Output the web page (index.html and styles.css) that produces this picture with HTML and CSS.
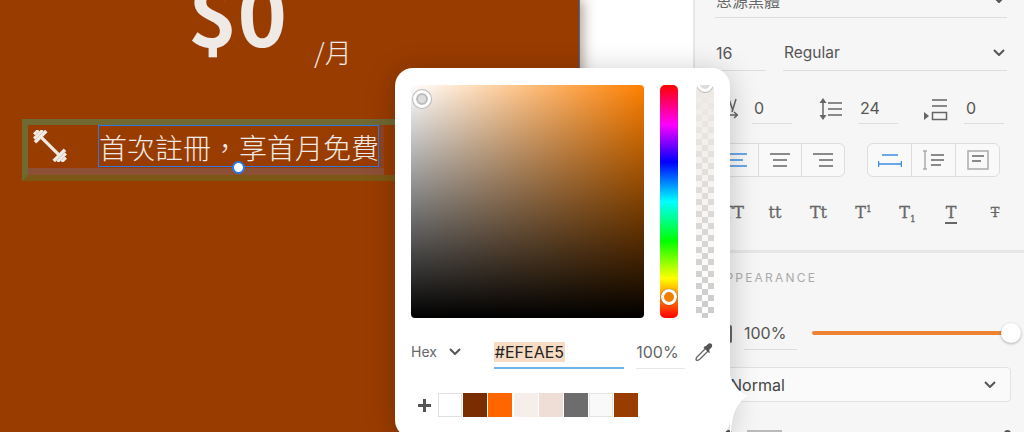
FILE: index.html
```html
<!DOCTYPE html>
<html lang="zh-Hant">
<head>
<meta charset="utf-8">
<title>Color picker</title>
<link rel="stylesheet" href="styles.css">
</head>
<body>
<div class="app">
  <main class="canvas">
    <div class="price">$0</div>
    <div class="per">/月</div>
    <div class="hl-group"></div>
    <div class="hl-inner"></div>
    <svg class="gym" viewBox="-18 -16 36 32" width="36" height="32">
      <g fill="#EFEAE5" transform="rotate(45)">
        <rect x="-13" y="-1.600" width="26" height="3.200"/>
        <rect x="-18" y="-6" width="3" height="12"/>
        <rect x="-15" y="-8" width="3.500" height="16"/>
        <rect x="-21" y="-3" width="3" height="6"/>
        <rect x="15" y="-6" width="3" height="12"/>
        <rect x="11.500" y="-8" width="3.500" height="16"/>
        <rect x="18" y="-3" width="3" height="6"/>
      </g>
    </svg>
    <div class="headline">首次註冊，享首月免費</div>
    <div class="handle"></div>
  </main>
  <div class="stage"></div>
  <aside class="panel">
    <div class="row-font"><span class="font-name">思源黑體</span><svg class="chev" viewBox="0 0 12 7" width="12" height="7"><path d="M1 1l5 5 5-5"/></svg></div>
    <div class="row-size">
      <div class="field size">16</div>
      <div class="field weight"><span>Regular</span><svg class="chev" viewBox="0 0 12 7" width="12" height="7"><path d="M1 1l5 5 5-5"/></svg></div>
    </div>
    <div class="row-metrics">
      <div class="metric first">
        <svg class="m-icon" viewBox="0 0 22 22" width="22" height="22"><path d="M13 1l4 12M20 1l-4 13" class="line"/><path d="M10 17h11M18 14l3.500 3-3.500 3" class="line"/></svg>
        <div class="field mini">0</div>
      </div>
      <div class="metric">
        <svg class="m-icon" viewBox="0 0 24 22" width="24" height="22"><path class="line" d="M4 4v14M9 5h14M9 11h14M9 17h14"/><path class="fill" d="M4 0l3.500 5h-7zM4 22l3.500-5h-7z"/></svg>
        <div class="field mini">24</div>
      </div>
      <div class="metric">
        <svg class="m-icon" viewBox="0 0 26 24" width="26" height="24"><path class="line" d="M9 2h15M9 8h15"/><path class="line" d="M9.500 14.500h14v7h-14z"/><path class="fill" d="M1 14l5 4-5 4z"/></svg>
        <div class="field mini">0</div>
      </div>
    </div>
    <div class="row-align">
      <div class="seg seg-a">
        <div class="seg-btn"><svg viewBox="0 0 20 14" width="20" height="14"><path class="blue" d="M0 1h20M0 7h16M0 13h20"/></svg></div>
        <div class="seg-btn"><svg viewBox="0 0 20 14" width="20" height="14"><path class="line" d="M0 1h20M3 7h14M3 13h14"/></svg></div>
        <div class="seg-btn"><svg viewBox="0 0 20 14" width="20" height="14"><path class="line" d="M0 1h20M6 7h14M6 13h14"/></svg></div>
      </div>
      <div class="seg seg-b">
        <div class="seg-btn"><svg viewBox="0 0 24 14" width="24" height="14"><path class="blue" d="M4 2h16M1 11h22M.5 8v6M23.500 8v6"/></svg></div>
        <div class="seg-btn"><svg viewBox="0 0 22 20" width="22" height="20"><path class="thin" d="M2 1v18M0 1h4M0 19h4"/><path class="line" d="M8 5h13M8 10h13M8 15h10"/></svg></div>
        <div class="seg-btn"><svg viewBox="0 0 22 20" width="22" height="20"><path class="thin" d="M1 1h20v18H1z"/><path class="line" d="M5 6h12M5 11h9"/></svg></div>
      </div>
    </div>
    <div class="row-case">
      <span class="tt">TT</span><span class="tt">tt</span><span class="tt">Tt</span>
      <span class="tt">T<sup>1</sup></span><span class="tt">T<sub>1</sub></span>
      <span class="tt"><span class="under">T</span></span><span class="tt small"><span class="strike">T</span></span>
    </div>
    <div class="section">
      <div class="sec-title">APPEARANCE</div>
      <div class="row-opacity">
        <div class="op-icon"></div>
        <div class="field pct">100%</div>
        <div class="slider"><div class="thumb"></div></div>
      </div>
      <div class="select"><span>Normal</span><svg class="chev" viewBox="0 0 12 7" width="12" height="7"><path d="M1 1l5 5 5-5"/></svg></div>
      <div class="row-next"><i class="dot"></i><i class="next-box"></i><i class="dot end"></i></div>
    </div>
  </aside>

  <section class="popover">
    <svg class="tail" viewBox="0 0 20 60" width="20" height="60"><path d="M0 0C3 12 10 17 18 21 8 27 2 36 1 60H0z"/></svg>
    <div class="pick-row">
      <div class="sb"><div class="sb-thumb"></div></div>
      <div class="hue"><div class="hue-thumb"></div></div>
      <div class="alpha"><div class="alpha-thumb"></div></div>
    </div>
    <div class="value-row">
      <span class="mode">Hex</span>
      <svg class="chev mode-chev" viewBox="0 0 12 7" width="12" height="7"><path d="M1 1l5 5 5-5"/></svg>
      <div class="hex"><span class="hex-sel">#EFEAE5</span></div>
      <div class="opa">100%</div>
      <svg class="dropper" viewBox="0 0 20 20" width="20" height="20"><path class="d-body" d="M12 6 3 15c-1 1-1 2-1 2.500s.8 1 1.500.8 1.500-.4 2.500-1.300l9-9"/><path class="d-head" d="M10.500 4.500l1.500-.5 1.500-1.500c1.500-1.500 3-1.500 4-.5s1 2.500-.5 4L15.500 7.500l-.5 1.500 1 1-1 1L9.500 5.500l1-1z"/></svg>
    </div>
    <div class="swatch-row">
      <svg class="plus" viewBox="0 0 15 15" width="15" height="15"><path d="M7.500 1v13M1 7.500h13"/></svg>
      <div class="swatches">
        <i class="sw s1"></i><i class="sw s2"></i><i class="sw s3"></i><i class="sw s4"></i>
        <i class="sw s5"></i><i class="sw s6"></i><i class="sw s7"></i><i class="sw s8"></i>
      </div>
    </div>
  </section>
</div>
</body>
</html>
```
FILE: styles.css
```css
* { box-sizing: border-box; }
html, body { margin: 0; padding: 0; width: 1024px; height: 432px; overflow: hidden; background: #fff; }
body { font-family: Inter, "Noto Sans CJK TC", sans-serif; color: #555; }
.app { position: relative; display: flex; width: 1024px; height: 432px; overflow: hidden; }

/* canvas */
.canvas { position: relative; width: 580px; height: 432px; background: #993C00; border-right: 1px solid #3f6fa8; box-shadow: 3px 0 12px rgba(70, 40, 20, .45); color: #EFEAE5; font-family: "Noto Sans CJK TC", sans-serif; z-index: 1; }
.stage { width: 113px; height: 432px; background: #fff; }
.price { position: absolute; left: 188px; top: -44px; font-size: 84px; line-height: 110px; font-weight: 700; }
.per { position: absolute; left: 314px; top: 32px; font-size: 27px; line-height: 40px; font-weight: 300; }
.hl-group { position: absolute; left: 22px; top: 119px; width: 380px; height: 62px; border-style: solid; border-width: 6px 0 6px 6px; border-color: rgb(112, 105, 50) transparent rgb(125, 88, 20) rgb(112, 105, 50); }
.hl-inner { position: absolute; left: 28px; top: 168px; width: 356px; height: 7px; background: rgba(130, 100, 110, .5); }
.hl-inner::after { content: ""; position: absolute; left: 350px; top: -43px; width: 6px; height: 43px; background: rgba(130, 80, 80, .4); }
.gym { position: absolute; left: 32px; top: 130px; }
.headline { position: absolute; left: 98px; top: 125px; width: 281px; height: 42px; border: 1px solid #2f7ae0; font-size: 28px; line-height: 42px; font-weight: 300; white-space: nowrap; padding-left: 0; }
.handle { position: absolute; left: 232px; top: 161px; width: 13px; height: 13px; border-radius: 50%; background: #fff; border: 2px solid #2f7ae0; }

/* panel */
.panel { width: 331px; height: 432px; background: #f6f6f6; border-left: 2px solid #e6e6e6; padding: 0 0 0 20px; }
.chev { fill: none; stroke: #555; stroke-width: 2; flex: none; }
.line { fill: none; stroke: #666; stroke-width: 1.500; }
.thin { fill: none; stroke: #aaa; stroke-width: 1.500; }
.blue { fill: none; stroke: #3d8fe0; stroke-width: 1.500; }
.fill { fill: #666; }
.row-font { width: 292px; height: 18px; border-bottom: 1px solid #ddd; display: flex; justify-content: space-between; overflow: hidden; padding-right: 2px; }
.font-name { font-family: "Noto Sans CJK TC", sans-serif; font-size: 16px; line-height: 16px; margin-top: -8px; padding-left: 1px; color: #666; }
.row-font .chev { margin-top: -4px; }
.field { border-bottom: 1px solid #ddd; font-size: 16px; color: #555; }
.row-size { display: flex; gap: 17px; width: 292px; margin-top: 17px; }
.size { width: 51px; height: 36px; line-height: 37px; padding-left: 1px; }
.weight { flex: 1; height: 36px; line-height: 37px; display: flex; justify-content: space-between; align-items: center; padding: 0 2px 0 1px; font-size: 15.500px; }
.row-metrics { display: flex; margin-top: 25px; width: 292px; }
.metric { display: flex; align-items: flex-start; gap: 15px; width: 80px; margin-left: 26px; justify-content: flex-end; }
.metric.first { width: 77px; margin-left: 0; gap: 14px; }
.mini { width: 40px; flex: none; height: 28px; line-height: 25px; padding-left: 2px; }
.m-icon { margin-top: 2px; flex: none; }
.row-align { display: flex; gap: 22px; margin-top: 19px; }
.seg { display: flex; height: 34px; border: 1px solid #ddd; border-radius: 6px; background: #f9f9f9; }
.seg-a { width: 130px; }
.seg-b { width: 133px; }
.seg-btn { flex: 1; display: flex; align-items: center; justify-content: center; border-left: 1px solid #ddd; }
.seg-btn:first-child { border-left: 0; }
.row-case { display: grid; grid-template-columns: 42px 42px 45px 45px 43px 44px 44px; margin: 24px 0 0 -3px; height: 24px; font-family: "DejaVu Serif", serif; font-size: 16px; line-height: 24px; font-weight: 400; color: #666; -webkit-text-stroke: .3px #666; }
.tt { display: block; text-align: center; white-space: nowrap; }
.tt sup, .tt sub { font-size: 9px; line-height: 0; }
.under { display: inline-block; border-bottom: 2px solid #666; height: 23px; padding: 0 1px; }
.small { font-size: 13px; }
.strike { text-decoration: line-through; }
.section { margin: 25px 0 0 -20px; padding: 0 0 0 20px; border-top: 3px solid #e6e6e6; height: 200px; }
.sec-title { margin: 17px 0 0 0; font-size: 12px; line-height: 16px; letter-spacing: 2.200px; color: #aaa; }
.row-opacity { display: flex; align-items: center; margin-top: 32px; }
.op-icon { width: 17px; height: 18px; border: 2px solid #666; border-radius: 2px; margin-right: 12px; }
.pct { width: 53px; height: 32px; line-height: 30px; }
.slider { position: relative; width: 198px; height: 4px; border-radius: 2px; background: #EE8233; margin: -2px 0 0 15px; }
.thumb { position: absolute; left: 189px; top: -8px; width: 20px; height: 20px; border-radius: 50%; background: #fff; box-shadow: 0 1px 3px rgba(0, 0, 0, .3); }
.select { display: flex; width: 296px; height: 35px; margin-top: 17px; border: 1px solid #e2e2e2; border-radius: 4px; background: #fafafa; align-items: center; justify-content: space-between; padding: 0 14px; font-size: 16px; color: #444; }
.row-next { display: flex; align-items: flex-start; margin-top: 28px; width: 296px; }
.dot { display: block; width: 7px; height: 7px; border-radius: 50%; background: #555; margin-left: 10px; }
.next-box { display: block; width: 35px; height: 6px; background: #bbb; margin-left: 15px; }
.dot.end { margin-left: auto; }

/* popover */
.popover { position: absolute; left: 395px; top: 68px; width: 335px; height: 370px; background: #fff; border-radius: 18px; padding: 17px 16px; box-shadow: 0 4px 30px rgba(0, 0, 0, .22); z-index: 2; }
.tail { position: absolute; left: 335px; top: 307px; }
.tail path { fill: #fff; }
.pick-row { display: flex; height: 232px; }
.sb { position: relative; width: 233px; height: 233px; border-radius: 4px; background: linear-gradient(to bottom, transparent, #000), linear-gradient(to right, #fff, #FF8000); }
.sb-thumb { position: absolute; left: 2px; top: 5px; width: 18px; height: 18px; border-radius: 50%; background: #ddd; border: 3px solid #fff; box-shadow: 0 0 0 1px #bbb, inset 0 0 0 2px #bbb; }
.hue { position: relative; width: 18px; height: 233px; margin-left: 16px; border-radius: 5px; background: linear-gradient(to bottom, #f00 0%, #f0f 17%, #00f 33%, #0ff 50%, #0f0 67%, #ff0 83%, #f00 100%); }
.hue-thumb { position: absolute; left: 1px; top: 204px; width: 16px; height: 16px; border-radius: 50%; background: #EE8000; border: 3px solid #fff; box-shadow: 0 0 1px #333; }
.alpha { position: relative; width: 18px; height: 233px; margin-left: 18px; border-radius: 5px; overflow: hidden; background: linear-gradient(to bottom, rgba(239, 234, 229, 1), rgba(239, 234, 229, 0)), repeating-conic-gradient(#ccc 0 25%, #fff 0 50%) 0 0 / 12px 12px; }
.alpha-thumb { position: absolute; left: 1px; top: -9px; width: 16px; height: 16px; border-radius: 50%; background: #ddd; border: 3px solid #fff; outline: 1px solid #bbb; }
.value-row { display: flex; align-items: flex-start; height: 34px; margin-top: 25px; }
.mode { width: 38px; font-size: 14px; line-height: 20px; color: #666; }
.mode-chev { margin-top: 6px; }
.hex { width: 131px; height: 27px; margin-left: 33px; border-bottom: 2px solid #6db3ea; }
.hex-sel { display: inline-block; padding: 0 1px; height: 20px; line-height: 20px; font-size: 16px; color: #222; background: #F7DCC5; }
.opa { width: 49px; height: 27px; margin-left: 12px; border-bottom: 1px solid #e8e8e8; font-size: 16px; line-height: 20px; color: #666; }
.dropper { margin-left: 9px; flex: none; }
.d-body { fill: none; stroke: #666; stroke-width: 1.300; }
.d-head { fill: #555; }
.swatch-row { display: flex; align-items: center; margin-top: 17px; height: 24px; padding-left: 6px; }
.plus { fill: none; stroke: #555; stroke-width: 3; }
.swatches { display: flex; gap: 1.200px; margin-left: 6px; }
.sw { display: block; width: 24px; height: 24px; }
.s1 { background: #fff; border: 1px solid #e0e0e0; }
.s2 { background: #7A2E00; }
.s3 { background: #FF6600; }
.s4 { background: #F5EEEA; }
.s5 { background: #EEDED6; }
.s6 { background: #6D6D6D; }
.s7 { background: #F9F9F9; border: 1px solid #e4e4e4; }
.s8 { background: #993C00; }
```
